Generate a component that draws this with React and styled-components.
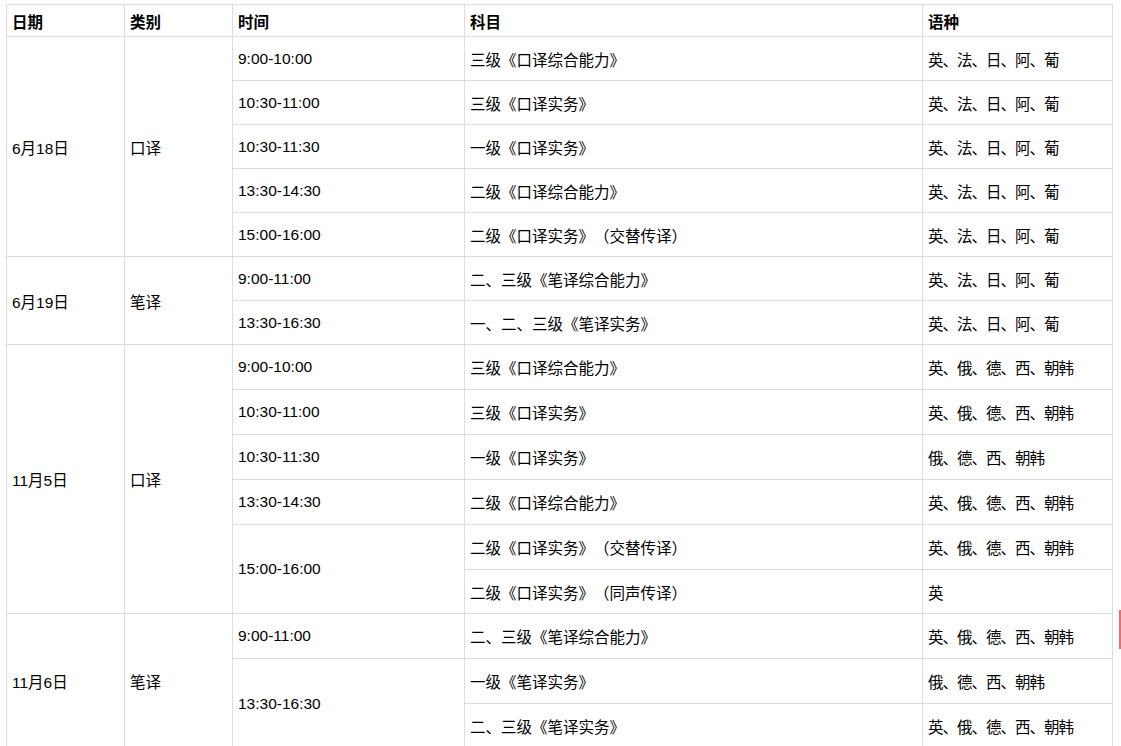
import React from 'react';
import styled, { createGlobalStyle } from 'styled-components';

const GlobalStyle = createGlobalStyle`
  html, body {
    margin: 0;
    padding: 0;
    background: #fff;
  }
  body {
    font-family: "Liberation Sans", Arial, "Noto Sans CJK SC", sans-serif;
    color: #000;
  }
`;

const Page = styled.div`
  position: relative;
  padding: 4px 0 0 6px;
  height: 746px;
  overflow: hidden;
  box-sizing: border-box;
`;

const Sheet = styled.table`
  width: 1106px;
  table-layout: fixed;
  border-collapse: collapse;
  font-size: 15.5px;
  text-spacing-trim: space-all;
`;

const Row = styled.tr`
  height: ${(p) => p.h}px;
`;

const HeadCell = styled.th`
  border: 1px solid #dcdcdc;
  padding: 0 5px;
  text-align: left;
  font-weight: bold;
  vertical-align: middle;
`;

const Cell = styled.td`
  border: 1px solid #dcdcdc;
  padding: 0 5px;
  text-align: left;
  vertical-align: middle;
  white-space: nowrap;
  letter-spacing: ${(p) => (p.tight ? '-1px' : 'normal')};
`;

/* small red mark at the right edge */
const EdgeMark = styled.div`
  position: absolute;
  left: 1119px;
  top: 610px;
  width: 2px;
  height: 39px;
  background: #f26b6b;
`;

const COLS = [118, 108, 232, 458, 190];
const HEAD = ['日期', '类别', '时间', '科目', '语种'];

const A = '英、法、日、阿、葡';
const B = '英、俄、德、西、朝韩';
const C = '俄、德、西、朝韩';

// each row: [height, cells...]; cell = text or { t, rs }
const ROWS = [
  [44, { t: '6月18日', rs: 5 }, { t: '口译', rs: 5 }, '9:00-10:00', '三级《口译综合能力》', A],
  [44, '10:30-11:00', '三级《口译实务》', A],
  [44, '10:30-11:30', '一级《口译实务》', A],
  [44, '13:30-14:30', '二级《口译综合能力》', A],
  [44, '15:00-16:00', '二级《口译实务》（交替传译）', A],
  [44, { t: '6月19日', rs: 2 }, { t: '笔译', rs: 2 }, '9:00-11:00', '二、三级《笔译综合能力》', A],
  [44, '13:30-16:30', '一、二、三级《笔译实务》', A],
  [45, { t: '11月5日', rs: 6 }, { t: '口译', rs: 6 }, '9:00-10:00', '三级《口译综合能力》', B],
  [45, '10:30-11:00', '三级《口译实务》', B],
  [45, '10:30-11:30', '一级《口译实务》', C],
  [45, '13:30-14:30', '二级《口译综合能力》', B],
  [45, { t: '15:00-16:00', rs: 2 }, '二级《口译实务》（交替传译）', B],
  [44, '二级《口译实务》（同声传译）', '英'],
  [45, { t: '11月6日', rs: 3 }, { t: '笔译', rs: 3 }, '9:00-11:00', '二、三级《笔译综合能力》', B],
  [45, { t: '13:30-16:30', rs: 2 }, '一级《笔译实务》', C],
  [45, '二、三级《笔译实务》', B],
];

const App = () => (
  <Page>
    <GlobalStyle />
    <Sheet>
      <colgroup>
        {COLS.map((w, i) => (
          <col key={i} style={{ width: w }} />
        ))}
      </colgroup>
      <thead>
        <Row h={32}>
          {HEAD.map((h) => (
            <HeadCell key={h}>{h}</HeadCell>
          ))}
        </Row>
      </thead>
      <tbody>
        {ROWS.map(([h, ...cells], i) => (
          <Row key={i} h={h}>
            {cells.map((c, j) => {
              // last cell of a row is always the language list
              const tight = j === cells.length - 1;
              return typeof c === 'string' ? (
                <Cell key={j} tight={tight}>
                  {c}
                </Cell>
              ) : (
                <Cell key={j} rowSpan={c.rs}>
                  {c.t}
                </Cell>
              );
            })}
          </Row>
        ))}
      </tbody>
    </Sheet>
    <EdgeMark />
  </Page>
);

export default App;
